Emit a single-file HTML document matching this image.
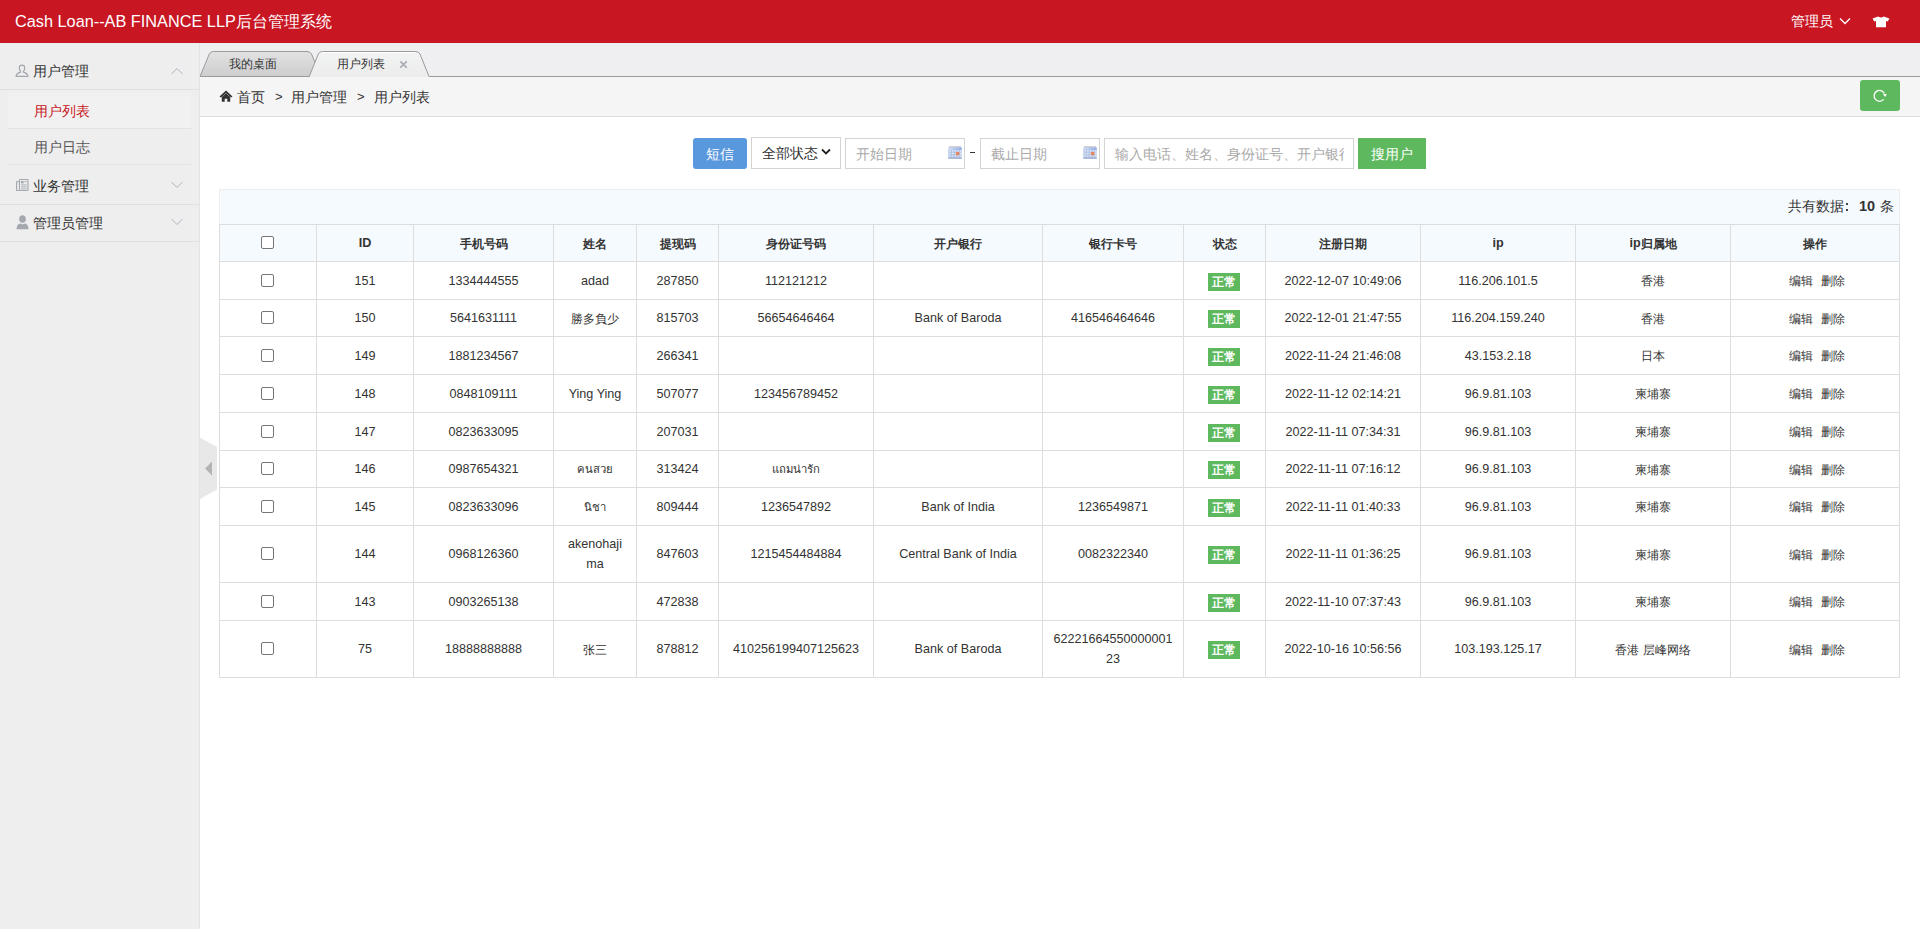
<!DOCTYPE html>
<html><head><meta charset="utf-8"><title>用户列表</title>
<style>
*{box-sizing:border-box;margin:0;padding:0}
html,body{width:1920px;height:929px;overflow:hidden;background:#fff;font-family:"Liberation Sans", sans-serif;color:#333}
.ab{position:absolute}
.hl{position:absolute;height:1px}
.vl{position:absolute;width:1px}
.c{position:absolute;text-align:center;white-space:nowrap;display:flex;align-items:center;justify-content:center;font-size:12.6px}
.cj{font-size:12px;position:relative;top:1px}.th{font-size:11.3px}
.chk{position:absolute;width:13px;height:13px;border:1px solid #767676;border-radius:2px;background:#fff}
</style></head><body>

<div class="ab" style="left:0;top:0;width:1920px;height:43px;background:#c81623"></div>
<div class="ab" style="left:15px;top:10px;height:22px;line-height:22px;font-size:16.3px;color:#fff;white-space:nowrap">Cash Loan--AB FINANCE LLP后台管理系统</div>
<div class="ab" style="left:1791px;top:11px;height:20px;line-height:20px;font-size:14px;color:#fff;white-space:nowrap">管理员</div>
<svg class="ab" style="left:1839px;top:17px" width="12" height="8" viewBox="0 0 12 8"><path d="M1 1.5 L6 6.5 L11 1.5" fill="none" stroke="#fff" stroke-width="1.3"/></svg>
<svg class="ab" style="left:1872px;top:15.5px" width="18" height="12" viewBox="0 0 18 12"><path d="M6.2 0.4 Q9 2.4 11.8 0.4 L17.4 2.6 L15.8 5.6 L14 5.0 L14 11.3 L4 11.3 L4 5.0 L2.2 5.6 L0.6 2.6 Z" fill="#fff"/></svg>
<div class="ab" style="left:0;top:43px;width:199px;height:886px;background:#eeeeee"></div>
<div class="vl" style="left:199px;top:43px;height:886px;background:#e3e3e3"></div>
<div class="hl" style="left:0;top:89px;width:199px;background:#e0e0e0"></div>
<div class="ab" style="left:8px;top:93px;width:183px;height:35px;background:#f1f1f1"></div>
<div class="hl" style="left:8px;top:128px;width:183px;background:#e3e3e3"></div>
<div class="hl" style="left:8px;top:164px;width:183px;background:#e3e3e3"></div>
<div class="hl" style="left:0;top:204px;width:199px;background:#e0e0e0"></div>
<div class="hl" style="left:0;top:241px;width:199px;background:#e0e0e0"></div>
<div class="ab" style="left:33.3px;top:62px;height:20px;line-height:20px;font-size:13.6px;color:#333;white-space:nowrap">用户管理</div>
<div class="ab" style="left:34px;top:102px;height:20px;line-height:20px;font-size:13.6px;color:#c81623;white-space:nowrap">用户列表</div>
<div class="ab" style="left:34px;top:138px;height:20px;line-height:20px;font-size:13.6px;color:#555;white-space:nowrap">用户日志</div>
<div class="ab" style="left:33.3px;top:177px;height:20px;line-height:20px;font-size:13.6px;color:#333;white-space:nowrap">业务管理</div>
<div class="ab" style="left:33.3px;top:213.5px;height:20px;line-height:20px;font-size:13.6px;color:#333;white-space:nowrap">管理员管理</div>
<svg class="ab" style="left:15px;top:64px" width="14" height="14" viewBox="0 0 14 14"><path d="M5.6 7.4 Q4.2 6 4.3 3.6 Q4.4 1.1 7 1.1 Q9.6 1.1 9.7 3.6 Q9.8 6 8.4 7.4 L8.4 8.1 Q12.7 9.3 12.9 12.4 L1.1 12.4 Q1.3 9.3 5.6 8.1 Z" fill="none" stroke="#a3a7ae" stroke-width="1.2"/></svg>
<svg class="ab" style="left:16px;top:179px" width="13" height="13" viewBox="0 0 13 13"><rect x="3.5" y="0.5" width="8.5" height="11" rx="0.8" fill="none" stroke="#a3a7ae" stroke-width="1.1"/><path d="M3.5 2.8 L0.6 2.8 L0.6 11.5 L3.5 11.5" fill="none" stroke="#a3a7ae" stroke-width="1.1"/><rect x="5" y="2" width="2.6" height="2.4" fill="#a3a7ae"/><path d="M8.3 2.6 H10.6 M5 5.9 H10.6 M5 7.9 H10.6 M5 9.9 H10.6" stroke="#a3a7ae" stroke-width="0.9"/></svg>
<svg class="ab" style="left:16px;top:215px" width="13" height="15" viewBox="0 0 13 15"><ellipse cx="6.5" cy="4" rx="3.3" ry="3.8" fill="#a3a7ae"/><path d="M0.5 14.2 Q0.5 9 4.5 8.4 L6.5 9.5 L8.5 8.4 Q12.5 9 12.5 14.2 Z" fill="#a3a7ae"/></svg>
<svg class="ab" style="left:171px;top:67px" width="12" height="8" viewBox="0 0 12 8"><path d="M0.7 6.8 L6 1.5 L11.3 6.8" fill="none" stroke="#aab3c0" stroke-width="1"/></svg>
<svg class="ab" style="left:171px;top:181px" width="12" height="8" viewBox="0 0 12 8"><path d="M0.7 1.2 L6 6.5 L11.3 1.2" fill="none" stroke="#aab3c0" stroke-width="1"/></svg>
<svg class="ab" style="left:171px;top:218px" width="12" height="8" viewBox="0 0 12 8"><path d="M0.7 1.2 L6 6.5 L11.3 1.2" fill="none" stroke="#aab3c0" stroke-width="1"/></svg>
<div class="ab" style="left:200px;top:43px;width:1720px;height:34px;background:#efeef0"></div>
<svg class="ab" style="left:200px;top:43px" width="1720" height="34" viewBox="0 0 1720 34">
<defs><linearGradient id="g1" x1="0" y1="0" x2="0" y2="1"><stop offset="0" stop-color="#e2e2e2"/><stop offset="1" stop-color="#cdcdcf"/></linearGradient>
<linearGradient id="g2" x1="0" y1="0" x2="0" y2="1"><stop offset="0" stop-color="#f2f3f3"/><stop offset="1" stop-color="#ececec"/></linearGradient></defs>
<path d="M0 33.5 L9.5 10.5 Q11 8.5 13.5 8.5 L107 8.5 Q110 8.5 111.5 11 L121 33.5 Z" fill="url(#g1)" stroke="#9a9a9a" stroke-width="1"/>
<path d="M109 34 L118.5 10.5 Q120 8.5 122.5 8.5 L215.5 8.5 Q218.5 8.5 220 11 L229 33.5 L1720 33.5" fill="url(#g2)" stroke="#9a9a9a" stroke-width="1"/>
<path d="M122 9.5 L215 9.5" stroke="#ffffff" stroke-width="1"/>
</svg>
<div class="ab" style="left:229px;top:57px;height:14px;line-height:14px;font-size:12px;color:#333;white-space:nowrap">我的桌面</div>
<div class="ab" style="left:337px;top:57px;height:14px;line-height:14px;font-size:12px;color:#333;white-space:nowrap">用户列表</div>
<svg class="ab" style="left:399px;top:60px" width="9" height="9" viewBox="0 0 9 9"><path d="M1.3 1.3 L7.7 7.7 M7.7 1.3 L1.3 7.7" stroke="#a9adb3" stroke-width="1.7"/></svg>
<div class="ab" style="left:200px;top:77px;width:1720px;height:39px;background:#f5f5f5"></div>
<div class="hl" style="left:200px;top:116px;width:1720px;background:#dddddd"></div>
<svg class="ab" style="left:219px;top:90px" width="14" height="12" viewBox="0 0 14 12"><path d="M7 0.5 L13.5 6.5 L12 7.6 L7 3 L2 7.6 L0.5 6.5 Z" fill="#333"/><path d="M2.8 7 L7 3.2 L11.2 7 L11.2 11.8 L8.3 11.8 L8.3 8.8 L5.7 8.8 L5.7 11.8 L2.8 11.8 Z" fill="#333"/></svg>
<div class="ab" style="left:237px;top:87px;height:20px;line-height:20px;font-size:14px;color:#333;white-space:nowrap">首页</div>
<div class="ab" style="left:275px;top:87px;height:20px;line-height:20px;font-size:13px;color:#333;white-space:nowrap">&gt;</div>
<div class="ab" style="left:291px;top:87px;height:20px;line-height:20px;font-size:14px;color:#333;white-space:nowrap">用户管理</div>
<div class="ab" style="left:357px;top:87px;height:20px;line-height:20px;font-size:13px;color:#333;white-space:nowrap">&gt;</div>
<div class="ab" style="left:374px;top:87px;height:20px;line-height:20px;font-size:14px;color:#333;white-space:nowrap">用户列表</div>
<div class="ab" style="left:1860px;top:80px;width:40px;height:31px;background:#5eb95e;border-radius:3px"></div>
<svg class="ab" style="left:1872px;top:88px" width="16" height="16" viewBox="0 0 16 16"><path d="M11.6 11.4 A5.4 5.4 0 1 1 12.4 5.6" fill="none" stroke="#fff" stroke-width="1.3"/><path d="M10.9 6.2 L14.9 5.9 L13.2 8.9 Z" fill="#fff"/></svg>
<svg class="ab" style="left:200px;top:437px" width="18" height="63" viewBox="0 0 18 63"><path d="M0 0.5 L17 10 L17 52.5 L0 62 Z" fill="#e8e8e8"/><path d="M5 31.5 L12 24.6 L12 38.4 Z" fill="#b3b3b3"/></svg>
<div class="ab" style="left:693px;top:138px;width:54px;height:31px;background:#5a98de;border-radius:3px;color:#fff;font-size:13.5px;line-height:33px;text-align:center">短信</div>
<div class="ab" style="left:751px;top:137px;width:90px;height:32px;border:1px solid #d4d4d4;background:#fff"></div>
<div class="ab" style="left:761.5px;top:144px;height:20px;line-height:20px;font-size:13.6px;color:#333;white-space:nowrap">全部状态</div>
<svg class="ab" style="left:821px;top:148px" width="10" height="8" viewBox="0 0 10 8"><path d="M1 1.5 L5 5.5 L9 1.5" fill="none" stroke="#222" stroke-width="1.8"/></svg>
<div class="ab" style="left:845px;top:138px;width:120px;height:31px;border:1px solid #d4d4d4;background:#fff"></div>
<div class="ab" style="left:856px;top:144px;height:20px;line-height:20px;font-size:14px;color:#aaa;white-space:nowrap">开始日期</div>
<svg class="ab" style="left:948px;top:146px" width="14" height="13" viewBox="0 0 14 13"><defs><linearGradient id="cg948" x1="0" y1="0" x2="1" y2="0"><stop offset="0" stop-color="#d4e0fb"/><stop offset="1" stop-color="#8fa9e6"/></linearGradient></defs><rect x="1" y="0.3" width="12" height="1.4" fill="#bdbdbd"/><rect x="0.3" y="1.6" width="13.4" height="11" fill="#b4c6e8"/><rect x="0.3" y="1.6" width="13.4" height="2.3" fill="url(#cg948)"/><rect x="1.4" y="4.4" width="1.3" height="1.1" fill="#fff" opacity="0.85"/><rect x="4.1" y="4.4" width="1.3" height="1.1" fill="#fff" opacity="0.85"/><rect x="6.8" y="4.4" width="1.3" height="1.1" fill="#fff" opacity="0.85"/><rect x="9.5" y="4.4" width="1.3" height="1.1" fill="#fff" opacity="0.85"/><rect x="12.0" y="4.4" width="1.3" height="1.1" fill="#fff" opacity="0.85"/><rect x="1.4" y="6.9" width="1.3" height="1.1" fill="#fff" opacity="0.85"/><rect x="4.1" y="6.9" width="1.3" height="1.1" fill="#fff" opacity="0.85"/><rect x="6.8" y="6.9" width="1.3" height="1.1" fill="#fff" opacity="0.85"/><rect x="9.5" y="6.9" width="1.3" height="1.1" fill="#fff" opacity="0.85"/><rect x="12.0" y="6.9" width="1.3" height="1.1" fill="#fff" opacity="0.85"/><rect x="1.4" y="9.4" width="1.3" height="1.1" fill="#fff" opacity="0.85"/><rect x="4.1" y="9.4" width="1.3" height="1.1" fill="#fff" opacity="0.85"/><rect x="6.8" y="9.4" width="1.3" height="1.1" fill="#fff" opacity="0.85"/><rect x="9.5" y="9.4" width="1.3" height="1.1" fill="#fff" opacity="0.85"/><rect x="12.0" y="9.4" width="1.3" height="1.1" fill="#fff" opacity="0.85"/><circle cx="9.6" cy="7.6" r="1.9" fill="#e9835f"/><rect x="0.3" y="11.6" width="13.4" height="1" fill="#95a6c4"/></svg>
<div class="ab" style="left:970px;top:152px;width:5px;height:1.4px;background:#333"></div>
<div class="ab" style="left:980px;top:138px;width:120px;height:31px;border:1px solid #d4d4d4;background:#fff"></div>
<div class="ab" style="left:991px;top:144px;height:20px;line-height:20px;font-size:14px;color:#aaa;white-space:nowrap">截止日期</div>
<svg class="ab" style="left:1083px;top:146px" width="14" height="13" viewBox="0 0 14 13"><defs><linearGradient id="cg1083" x1="0" y1="0" x2="1" y2="0"><stop offset="0" stop-color="#d4e0fb"/><stop offset="1" stop-color="#8fa9e6"/></linearGradient></defs><rect x="1" y="0.3" width="12" height="1.4" fill="#bdbdbd"/><rect x="0.3" y="1.6" width="13.4" height="11" fill="#b4c6e8"/><rect x="0.3" y="1.6" width="13.4" height="2.3" fill="url(#cg1083)"/><rect x="1.4" y="4.4" width="1.3" height="1.1" fill="#fff" opacity="0.85"/><rect x="4.1" y="4.4" width="1.3" height="1.1" fill="#fff" opacity="0.85"/><rect x="6.8" y="4.4" width="1.3" height="1.1" fill="#fff" opacity="0.85"/><rect x="9.5" y="4.4" width="1.3" height="1.1" fill="#fff" opacity="0.85"/><rect x="12.0" y="4.4" width="1.3" height="1.1" fill="#fff" opacity="0.85"/><rect x="1.4" y="6.9" width="1.3" height="1.1" fill="#fff" opacity="0.85"/><rect x="4.1" y="6.9" width="1.3" height="1.1" fill="#fff" opacity="0.85"/><rect x="6.8" y="6.9" width="1.3" height="1.1" fill="#fff" opacity="0.85"/><rect x="9.5" y="6.9" width="1.3" height="1.1" fill="#fff" opacity="0.85"/><rect x="12.0" y="6.9" width="1.3" height="1.1" fill="#fff" opacity="0.85"/><rect x="1.4" y="9.4" width="1.3" height="1.1" fill="#fff" opacity="0.85"/><rect x="4.1" y="9.4" width="1.3" height="1.1" fill="#fff" opacity="0.85"/><rect x="6.8" y="9.4" width="1.3" height="1.1" fill="#fff" opacity="0.85"/><rect x="9.5" y="9.4" width="1.3" height="1.1" fill="#fff" opacity="0.85"/><rect x="12.0" y="9.4" width="1.3" height="1.1" fill="#fff" opacity="0.85"/><circle cx="9.6" cy="7.6" r="1.9" fill="#e9835f"/><rect x="0.3" y="11.6" width="13.4" height="1" fill="#95a6c4"/></svg>
<div class="ab" style="left:1104px;top:138px;width:250px;height:31px;border:1px solid #d4d4d4;background:#fff;overflow:hidden"></div>
<div class="ab" style="left:1115px;top:144px;width:229px;overflow:hidden;height:20px;line-height:20px;font-size:14px;color:#aaa;white-space:nowrap">输入电话、姓名、身份证号、开户银行</div>
<div class="ab" style="left:1358px;top:138px;width:68px;height:31px;background:#5eb95e;color:#fff;font-size:13.6px;line-height:33px;text-align:center">搜用户</div>
<div class="ab" style="left:219px;top:189px;width:1681px;height:35px;background:#f5fafe;border:1px solid #eeeeee;border-bottom:none"></div>
<div class="ab" style="left:1788px;top:197px;height:20px;line-height:20px;font-size:13.5px;color:#333;white-space:nowrap">共有数据</div>
<div class="ab" style="left:1846px;top:203px;width:2px;height:2px;background:#444"></div>
<div class="ab" style="left:1846px;top:209px;width:2px;height:2px;background:#444"></div>
<div class="ab" style="left:1859px;top:196px;height:20px;line-height:20px;font-size:14.5px;font-weight:bold;color:#333;white-space:nowrap">10</div>
<div class="ab" style="left:1880px;top:197px;height:20px;line-height:20px;font-size:13.5px;color:#333;white-space:nowrap">条</div>
<div class="ab" style="left:219px;top:224px;width:1681px;height:37px;background:#f5fafe"></div>
<div class="hl" style="left:219px;top:224px;width:1681px;background:#dddddd"></div>
<div class="hl" style="left:219px;top:261px;width:1681px;background:#dddddd"></div>
<div class="hl" style="left:219px;top:299px;width:1681px;background:#dddddd"></div>
<div class="hl" style="left:219px;top:336px;width:1681px;background:#dddddd"></div>
<div class="hl" style="left:219px;top:374px;width:1681px;background:#dddddd"></div>
<div class="hl" style="left:219px;top:412px;width:1681px;background:#dddddd"></div>
<div class="hl" style="left:219px;top:450px;width:1681px;background:#dddddd"></div>
<div class="hl" style="left:219px;top:487px;width:1681px;background:#dddddd"></div>
<div class="hl" style="left:219px;top:525px;width:1681px;background:#dddddd"></div>
<div class="hl" style="left:219px;top:582px;width:1681px;background:#dddddd"></div>
<div class="hl" style="left:219px;top:620px;width:1681px;background:#dddddd"></div>
<div class="hl" style="left:219px;top:677px;width:1681px;background:#dddddd"></div>
<div class="vl" style="left:219px;top:224px;height:454px;background:#dddddd"></div>
<div class="vl" style="left:316px;top:224px;height:454px;background:#dddddd"></div>
<div class="vl" style="left:413px;top:224px;height:454px;background:#dddddd"></div>
<div class="vl" style="left:553px;top:224px;height:454px;background:#dddddd"></div>
<div class="vl" style="left:636px;top:224px;height:454px;background:#dddddd"></div>
<div class="vl" style="left:718px;top:224px;height:454px;background:#dddddd"></div>
<div class="vl" style="left:873px;top:224px;height:454px;background:#dddddd"></div>
<div class="vl" style="left:1042px;top:224px;height:454px;background:#dddddd"></div>
<div class="vl" style="left:1183px;top:224px;height:454px;background:#dddddd"></div>
<div class="vl" style="left:1265px;top:224px;height:454px;background:#dddddd"></div>
<div class="vl" style="left:1420px;top:224px;height:454px;background:#dddddd"></div>
<div class="vl" style="left:1575px;top:224px;height:454px;background:#dddddd"></div>
<div class="vl" style="left:1730px;top:224px;height:454px;background:#dddddd"></div>
<div class="vl" style="left:1899px;top:224px;height:454px;background:#dddddd"></div>
<div class="chk" style="left:261px;top:236px"></div>
<div class="c" style="left:317px;top:225px;width:96px;height:36px;font-weight:bold">ID</div>
<div class="c" style="left:414px;top:225px;width:139px;height:36px;font-weight:bold"><span class="cj">手机号码</span></div>
<div class="c" style="left:554px;top:225px;width:82px;height:36px;font-weight:bold"><span class="cj">姓名</span></div>
<div class="c" style="left:637px;top:225px;width:81px;height:36px;font-weight:bold"><span class="cj">提现码</span></div>
<div class="c" style="left:719px;top:225px;width:154px;height:36px;font-weight:bold"><span class="cj">身份证号码</span></div>
<div class="c" style="left:874px;top:225px;width:168px;height:36px;font-weight:bold"><span class="cj">开户银行</span></div>
<div class="c" style="left:1043px;top:225px;width:140px;height:36px;font-weight:bold"><span class="cj">银行卡号</span></div>
<div class="c" style="left:1184px;top:225px;width:81px;height:36px;font-weight:bold"><span class="cj">状态</span></div>
<div class="c" style="left:1266px;top:225px;width:154px;height:36px;font-weight:bold"><span class="cj">注册日期</span></div>
<div class="c" style="left:1421px;top:225px;width:154px;height:36px;font-weight:bold">ip</div>
<div class="c" style="left:1576px;top:225px;width:154px;height:36px;font-weight:bold">ip<span class="cj">归属地</span></div>
<div class="c" style="left:1731px;top:225px;width:168px;height:36px;font-weight:bold"><span class="cj">操作</span></div>
<div class="chk" style="left:261px;top:274px"></div>
<div class="c" style="left:317px;top:262px;width:96px;height:37px;"><span>151</span></div>
<div class="c" style="left:414px;top:262px;width:139px;height:37px;"><span>1334444555</span></div>
<div class="c" style="left:554px;top:262px;width:82px;height:37px;"><span>adad</span></div>
<div class="c" style="left:637px;top:262px;width:81px;height:37px;"><span>287850</span></div>
<div class="c" style="left:719px;top:262px;width:154px;height:37px;"><span>112121212</span></div>
<div class="c" style="left:1184px;top:262px;width:81px;height:37px"><span style="display:inline-block;width:32px;height:18px;line-height:18px;background:#5eb95e;color:#fff;font-weight:bold;font-size:12px;position:relative;top:1px;left:-1px">正常</span></div>
<div class="c" style="left:1266px;top:262px;width:154px;height:37px;"><span>2022-12-07 10:49:06</span></div>
<div class="c" style="left:1421px;top:262px;width:154px;height:37px;"><span>116.206.101.5</span></div>
<div class="c" style="left:1576px;top:262px;width:154px;height:37px;"><span><span class="cj">香港</span></span></div>
<div class="c" style="left:1731px;top:262px;width:168px;height:37px;font-size:12px;padding-left:4px"><span style='position:relative;top:1px'>编辑<span style='display:inline-block;width:8px'></span>删除</span></div>
<div class="chk" style="left:261px;top:311px"></div>
<div class="c" style="left:317px;top:300px;width:96px;height:36px;"><span>150</span></div>
<div class="c" style="left:414px;top:300px;width:139px;height:36px;"><span>5641631111</span></div>
<div class="c" style="left:554px;top:300px;width:82px;height:36px;"><span><span class="cj">勝多負少</span></span></div>
<div class="c" style="left:637px;top:300px;width:81px;height:36px;"><span>815703</span></div>
<div class="c" style="left:719px;top:300px;width:154px;height:36px;"><span>56654646464</span></div>
<div class="c" style="left:874px;top:300px;width:168px;height:36px;"><span>Bank of Baroda</span></div>
<div class="c" style="left:1043px;top:300px;width:140px;height:36px;"><span>416546464646</span></div>
<div class="c" style="left:1184px;top:300px;width:81px;height:36px"><span style="display:inline-block;width:32px;height:18px;line-height:18px;background:#5eb95e;color:#fff;font-weight:bold;font-size:12px;position:relative;top:1px;left:-1px">正常</span></div>
<div class="c" style="left:1266px;top:300px;width:154px;height:36px;"><span>2022-12-01 21:47:55</span></div>
<div class="c" style="left:1421px;top:300px;width:154px;height:36px;"><span>116.204.159.240</span></div>
<div class="c" style="left:1576px;top:300px;width:154px;height:36px;"><span><span class="cj">香港</span></span></div>
<div class="c" style="left:1731px;top:300px;width:168px;height:36px;font-size:12px;padding-left:4px"><span style='position:relative;top:1px'>编辑<span style='display:inline-block;width:8px'></span>删除</span></div>
<div class="chk" style="left:261px;top:349px"></div>
<div class="c" style="left:317px;top:337px;width:96px;height:37px;"><span>149</span></div>
<div class="c" style="left:414px;top:337px;width:139px;height:37px;"><span>1881234567</span></div>
<div class="c" style="left:637px;top:337px;width:81px;height:37px;"><span>266341</span></div>
<div class="c" style="left:1184px;top:337px;width:81px;height:37px"><span style="display:inline-block;width:32px;height:18px;line-height:18px;background:#5eb95e;color:#fff;font-weight:bold;font-size:12px;position:relative;top:1px;left:-1px">正常</span></div>
<div class="c" style="left:1266px;top:337px;width:154px;height:37px;"><span>2022-11-24 21:46:08</span></div>
<div class="c" style="left:1421px;top:337px;width:154px;height:37px;"><span>43.153.2.18</span></div>
<div class="c" style="left:1576px;top:337px;width:154px;height:37px;"><span><span class="cj">日本</span></span></div>
<div class="c" style="left:1731px;top:337px;width:168px;height:37px;font-size:12px;padding-left:4px"><span style='position:relative;top:1px'>编辑<span style='display:inline-block;width:8px'></span>删除</span></div>
<div class="chk" style="left:261px;top:387px"></div>
<div class="c" style="left:317px;top:375px;width:96px;height:37px;"><span>148</span></div>
<div class="c" style="left:414px;top:375px;width:139px;height:37px;"><span>0848109111</span></div>
<div class="c" style="left:554px;top:375px;width:82px;height:37px;"><span>Ying Ying</span></div>
<div class="c" style="left:637px;top:375px;width:81px;height:37px;"><span>507077</span></div>
<div class="c" style="left:719px;top:375px;width:154px;height:37px;"><span>123456789452</span></div>
<div class="c" style="left:1184px;top:375px;width:81px;height:37px"><span style="display:inline-block;width:32px;height:18px;line-height:18px;background:#5eb95e;color:#fff;font-weight:bold;font-size:12px;position:relative;top:1px;left:-1px">正常</span></div>
<div class="c" style="left:1266px;top:375px;width:154px;height:37px;"><span>2022-11-12 02:14:21</span></div>
<div class="c" style="left:1421px;top:375px;width:154px;height:37px;"><span>96.9.81.103</span></div>
<div class="c" style="left:1576px;top:375px;width:154px;height:37px;"><span><span class="cj">柬埔寨</span></span></div>
<div class="c" style="left:1731px;top:375px;width:168px;height:37px;font-size:12px;padding-left:4px"><span style='position:relative;top:1px'>编辑<span style='display:inline-block;width:8px'></span>删除</span></div>
<div class="chk" style="left:261px;top:425px"></div>
<div class="c" style="left:317px;top:413px;width:96px;height:37px;"><span>147</span></div>
<div class="c" style="left:414px;top:413px;width:139px;height:37px;"><span>0823633095</span></div>
<div class="c" style="left:637px;top:413px;width:81px;height:37px;"><span>207031</span></div>
<div class="c" style="left:1184px;top:413px;width:81px;height:37px"><span style="display:inline-block;width:32px;height:18px;line-height:18px;background:#5eb95e;color:#fff;font-weight:bold;font-size:12px;position:relative;top:1px;left:-1px">正常</span></div>
<div class="c" style="left:1266px;top:413px;width:154px;height:37px;"><span>2022-11-11 07:34:31</span></div>
<div class="c" style="left:1421px;top:413px;width:154px;height:37px;"><span>96.9.81.103</span></div>
<div class="c" style="left:1576px;top:413px;width:154px;height:37px;"><span><span class="cj">柬埔寨</span></span></div>
<div class="c" style="left:1731px;top:413px;width:168px;height:37px;font-size:12px;padding-left:4px"><span style='position:relative;top:1px'>编辑<span style='display:inline-block;width:8px'></span>删除</span></div>
<div class="chk" style="left:261px;top:462px"></div>
<div class="c" style="left:317px;top:451px;width:96px;height:36px;"><span>146</span></div>
<div class="c" style="left:414px;top:451px;width:139px;height:36px;"><span>0987654321</span></div>
<div class="c" style="left:554px;top:451px;width:82px;height:36px;"><span><span class="th">คนสวย</span></span></div>
<div class="c" style="left:637px;top:451px;width:81px;height:36px;"><span>313424</span></div>
<div class="c" style="left:719px;top:451px;width:154px;height:36px;"><span><span class="th">แถมน่ารัก</span></span></div>
<div class="c" style="left:1184px;top:451px;width:81px;height:36px"><span style="display:inline-block;width:32px;height:18px;line-height:18px;background:#5eb95e;color:#fff;font-weight:bold;font-size:12px;position:relative;top:1px;left:-1px">正常</span></div>
<div class="c" style="left:1266px;top:451px;width:154px;height:36px;"><span>2022-11-11 07:16:12</span></div>
<div class="c" style="left:1421px;top:451px;width:154px;height:36px;"><span>96.9.81.103</span></div>
<div class="c" style="left:1576px;top:451px;width:154px;height:36px;"><span><span class="cj">柬埔寨</span></span></div>
<div class="c" style="left:1731px;top:451px;width:168px;height:36px;font-size:12px;padding-left:4px"><span style='position:relative;top:1px'>编辑<span style='display:inline-block;width:8px'></span>删除</span></div>
<div class="chk" style="left:261px;top:500px"></div>
<div class="c" style="left:317px;top:488px;width:96px;height:37px;"><span>145</span></div>
<div class="c" style="left:414px;top:488px;width:139px;height:37px;"><span>0823633096</span></div>
<div class="c" style="left:554px;top:488px;width:82px;height:37px;"><span><span class="th">นิชา</span></span></div>
<div class="c" style="left:637px;top:488px;width:81px;height:37px;"><span>809444</span></div>
<div class="c" style="left:719px;top:488px;width:154px;height:37px;"><span>1236547892</span></div>
<div class="c" style="left:874px;top:488px;width:168px;height:37px;"><span>Bank of India</span></div>
<div class="c" style="left:1043px;top:488px;width:140px;height:37px;"><span>1236549871</span></div>
<div class="c" style="left:1184px;top:488px;width:81px;height:37px"><span style="display:inline-block;width:32px;height:18px;line-height:18px;background:#5eb95e;color:#fff;font-weight:bold;font-size:12px;position:relative;top:1px;left:-1px">正常</span></div>
<div class="c" style="left:1266px;top:488px;width:154px;height:37px;"><span>2022-11-11 01:40:33</span></div>
<div class="c" style="left:1421px;top:488px;width:154px;height:37px;"><span>96.9.81.103</span></div>
<div class="c" style="left:1576px;top:488px;width:154px;height:37px;"><span><span class="cj">柬埔寨</span></span></div>
<div class="c" style="left:1731px;top:488px;width:168px;height:37px;font-size:12px;padding-left:4px"><span style='position:relative;top:1px'>编辑<span style='display:inline-block;width:8px'></span>删除</span></div>
<div class="chk" style="left:261px;top:547px"></div>
<div class="c" style="left:317px;top:526px;width:96px;height:56px;"><span>144</span></div>
<div class="c" style="left:414px;top:526px;width:139px;height:56px;"><span>0968126360</span></div>
<div class="c" style="left:554px;top:526px;width:82px;height:56px;line-height:20px;"><span>akenohaji<br>ma</span></div>
<div class="c" style="left:637px;top:526px;width:81px;height:56px;"><span>847603</span></div>
<div class="c" style="left:719px;top:526px;width:154px;height:56px;"><span>1215454484884</span></div>
<div class="c" style="left:874px;top:526px;width:168px;height:56px;"><span>Central Bank of India</span></div>
<div class="c" style="left:1043px;top:526px;width:140px;height:56px;"><span>0082322340</span></div>
<div class="c" style="left:1184px;top:526px;width:81px;height:56px"><span style="display:inline-block;width:32px;height:18px;line-height:18px;background:#5eb95e;color:#fff;font-weight:bold;font-size:12px;position:relative;top:1px;left:-1px">正常</span></div>
<div class="c" style="left:1266px;top:526px;width:154px;height:56px;"><span>2022-11-11 01:36:25</span></div>
<div class="c" style="left:1421px;top:526px;width:154px;height:56px;"><span>96.9.81.103</span></div>
<div class="c" style="left:1576px;top:526px;width:154px;height:56px;"><span><span class="cj">柬埔寨</span></span></div>
<div class="c" style="left:1731px;top:526px;width:168px;height:56px;font-size:12px;padding-left:4px"><span style='position:relative;top:1px'>编辑<span style='display:inline-block;width:8px'></span>删除</span></div>
<div class="chk" style="left:261px;top:595px"></div>
<div class="c" style="left:317px;top:583px;width:96px;height:37px;"><span>143</span></div>
<div class="c" style="left:414px;top:583px;width:139px;height:37px;"><span>0903265138</span></div>
<div class="c" style="left:637px;top:583px;width:81px;height:37px;"><span>472838</span></div>
<div class="c" style="left:1184px;top:583px;width:81px;height:37px"><span style="display:inline-block;width:32px;height:18px;line-height:18px;background:#5eb95e;color:#fff;font-weight:bold;font-size:12px;position:relative;top:1px;left:-1px">正常</span></div>
<div class="c" style="left:1266px;top:583px;width:154px;height:37px;"><span>2022-11-10 07:37:43</span></div>
<div class="c" style="left:1421px;top:583px;width:154px;height:37px;"><span>96.9.81.103</span></div>
<div class="c" style="left:1576px;top:583px;width:154px;height:37px;"><span><span class="cj">柬埔寨</span></span></div>
<div class="c" style="left:1731px;top:583px;width:168px;height:37px;font-size:12px;padding-left:4px"><span style='position:relative;top:1px'>编辑<span style='display:inline-block;width:8px'></span>删除</span></div>
<div class="chk" style="left:261px;top:642px"></div>
<div class="c" style="left:317px;top:621px;width:96px;height:56px;"><span>75</span></div>
<div class="c" style="left:414px;top:621px;width:139px;height:56px;"><span>18888888888</span></div>
<div class="c" style="left:554px;top:621px;width:82px;height:56px;"><span><span class="cj">张三</span></span></div>
<div class="c" style="left:637px;top:621px;width:81px;height:56px;"><span>878812</span></div>
<div class="c" style="left:719px;top:621px;width:154px;height:56px;"><span>410256199407125623</span></div>
<div class="c" style="left:874px;top:621px;width:168px;height:56px;"><span>Bank of Baroda</span></div>
<div class="c" style="left:1043px;top:621px;width:140px;height:56px;line-height:20px;"><span>62221664550000001<br>23</span></div>
<div class="c" style="left:1184px;top:621px;width:81px;height:56px"><span style="display:inline-block;width:32px;height:18px;line-height:18px;background:#5eb95e;color:#fff;font-weight:bold;font-size:12px;position:relative;top:1px;left:-1px">正常</span></div>
<div class="c" style="left:1266px;top:621px;width:154px;height:56px;"><span>2022-10-16 10:56:56</span></div>
<div class="c" style="left:1421px;top:621px;width:154px;height:56px;"><span>103.193.125.17</span></div>
<div class="c" style="left:1576px;top:621px;width:154px;height:56px;"><span><span class="cj">香港</span> <span class="cj">层峰网络</span></span></div>
<div class="c" style="left:1731px;top:621px;width:168px;height:56px;font-size:12px;padding-left:4px"><span style='position:relative;top:1px'>编辑<span style='display:inline-block;width:8px'></span>删除</span></div>
</body></html>
